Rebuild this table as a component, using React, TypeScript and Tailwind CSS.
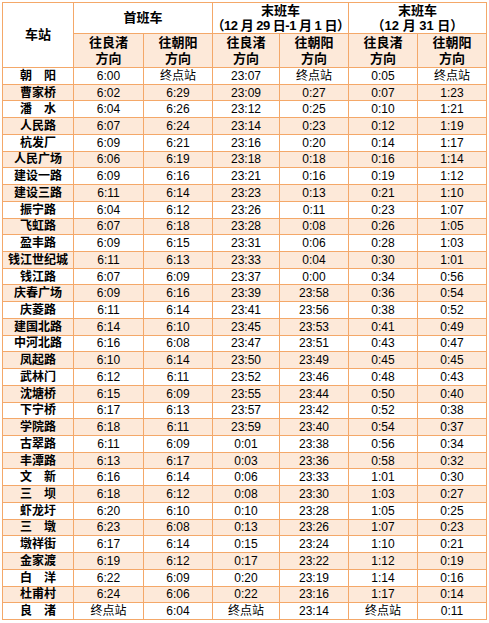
const rows: string[][] = [
  ["朝　阳", "6:00", "终点站", "23:07", "终点站", "0:05", "终点站"],
  ["曹家桥", "6:02", "6:29", "23:09", "0:27", "0:07", "1:23"],
  ["潘　水", "6:04", "6:26", "23:12", "0:25", "0:10", "1:21"],
  ["人民路", "6:07", "6:24", "23:14", "0:23", "0:12", "1:19"],
  ["杭发厂", "6:09", "6:21", "23:16", "0:20", "0:14", "1:17"],
  ["人民广场", "6:06", "6:19", "23:18", "0:18", "0:16", "1:14"],
  ["建设一路", "6:09", "6:16", "23:21", "0:16", "0:19", "1:12"],
  ["建设三路", "6:11", "6:14", "23:23", "0:13", "0:21", "1:10"],
  ["振宁路", "6:04", "6:12", "23:26", "0:11", "0:23", "1:07"],
  ["飞虹路", "6:07", "6:18", "23:28", "0:08", "0:26", "1:05"],
  ["盈丰路", "6:09", "6:15", "23:31", "0:06", "0:28", "1:03"],
  ["钱江世纪城", "6:11", "6:13", "23:33", "0:04", "0:30", "1:01"],
  ["钱江路", "6:07", "6:09", "23:37", "0:00", "0:34", "0:56"],
  ["庆春广场", "6:09", "6:16", "23:39", "23:58", "0:36", "0:54"],
  ["庆菱路", "6:11", "6:14", "23:41", "23:56", "0:38", "0:52"],
  ["建国北路", "6:14", "6:10", "23:45", "23:53", "0:41", "0:49"],
  ["中河北路", "6:16", "6:08", "23:47", "23:51", "0:43", "0:47"],
  ["凤起路", "6:10", "6:14", "23:50", "23:49", "0:45", "0:45"],
  ["武林门", "6:12", "6:11", "23:52", "23:46", "0:48", "0:43"],
  ["沈塘桥", "6:15", "6:09", "23:55", "23:44", "0:50", "0:40"],
  ["下宁桥", "6:17", "6:13", "23:57", "23:42", "0:52", "0:38"],
  ["学院路", "6:18", "6:11", "23:59", "23:40", "0:54", "0:37"],
  ["古翠路", "6:11", "6:09", "0:01", "23:38", "0:56", "0:34"],
  ["丰潭路", "6:13", "6:17", "0:03", "23:36", "0:58", "0:32"],
  ["文　新", "6:16", "6:14", "0:06", "23:33", "1:01", "0:30"],
  ["三　坝", "6:18", "6:12", "0:08", "23:30", "1:03", "0:27"],
  ["虾龙圩", "6:20", "6:10", "0:10", "23:28", "1:05", "0:25"],
  ["三　墩", "6:23", "6:08", "0:13", "23:26", "1:07", "0:23"],
  ["墩祥街", "6:17", "6:14", "0:15", "23:24", "1:10", "0:21"],
  ["金家渡", "6:19", "6:12", "0:17", "23:22", "1:12", "0:19"],
  ["白　洋", "6:22", "6:09", "0:20", "23:19", "1:14", "0:16"],
  ["杜甫村", "6:24", "6:06", "0:22", "23:16", "1:17", "0:14"],
  ["良　渚", "终点站", "6:04", "终点站", "23:14", "终点站", "0:11"],
]

const cjk = "font-['Liberation_Sans','Noto_Sans_CJK_SC',sans-serif]"

function Direction({ to }: { to: string }) {
  return (
    <div className="bg-[#fde9d9] flex flex-col items-center justify-center text-[13px] font-bold leading-[16px]">
      <span>{to}</span>
      <span>方向</span>
    </div>
  )
}

export default function App() {
  return (
    <div className="bg-white w-[489px] h-[623px] pt-[2px] pl-[2px]">
      <div
        className={`${cjk} text-black w-[485px] h-[618px] bg-[#f4a869] p-px gap-px grid grid-cols-[70px_69px_68px_66px_68px_68px_68px] grid-rows-[30px_33px_repeat(33,minmax(0,1fr))]`}
      >
        <div className="row-span-2 bg-white flex items-center justify-center text-[13px] font-bold">车站</div>
        <div className="col-span-2 bg-white flex items-center justify-center text-[13px] font-bold">首班车</div>
        <div className="col-span-2 bg-white flex flex-col items-center justify-center text-[13px] font-bold leading-[15px]">
          <span>末班车</span>
          <span className="tracking-[-0.5px] whitespace-nowrap">（12 月 29 日-1 月 1 日）</span>
        </div>
        <div className="col-span-2 bg-white flex flex-col items-center justify-center text-[13px] font-bold leading-[15px]">
          <span>末班车</span>
          <span className="whitespace-nowrap">（12 月 31 日）</span>
        </div>
        <Direction to="往良渚" />
        <Direction to="往朝阳" />
        <Direction to="往良渚" />
        <Direction to="往朝阳" />
        <Direction to="往良渚" />
        <Direction to="往朝阳" />
        {rows.map((r, i) =>
          r.map((c, j) => (
            <div
              key={`${i}-${j}`}
              className={`${i % 2 === 1 ? "bg-[#fde9d9]" : "bg-white"} flex items-center justify-center leading-none whitespace-nowrap ${
                j === 0 ? "font-bold text-[12px]" : "text-[12px]"
              }`}
            >
              {c}
            </div>
          ))
        )}
      </div>
    </div>
  )
}
